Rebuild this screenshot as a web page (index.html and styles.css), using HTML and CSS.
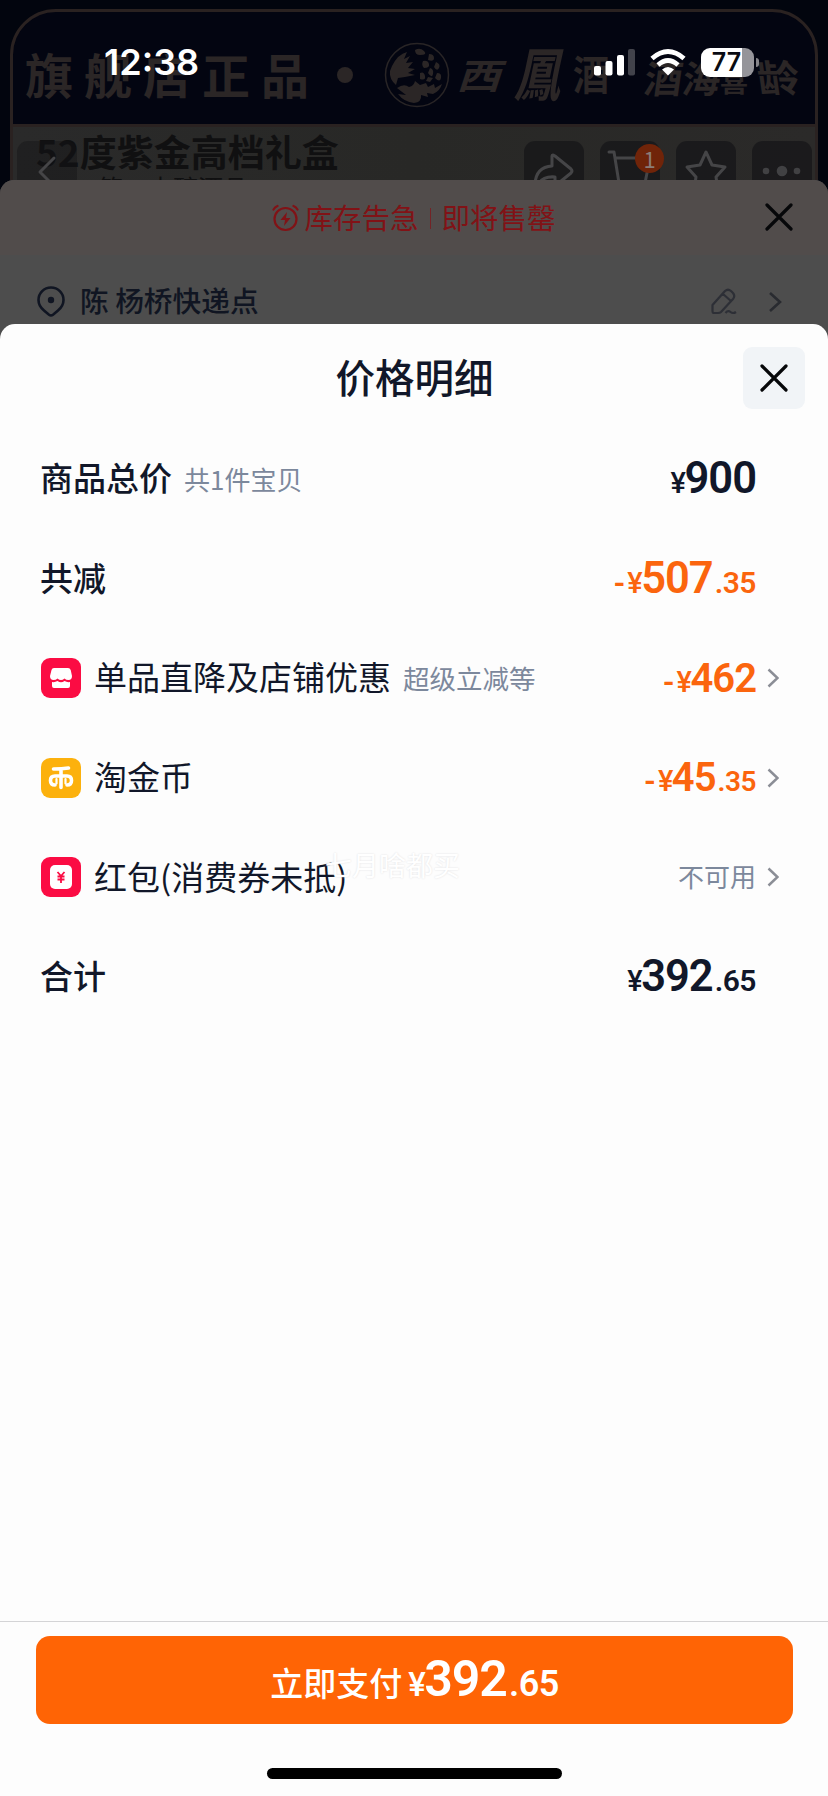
FILE: index.html
```
<!DOCTYPE html>
<html lang="zh-CN">
<head>
<meta charset="UTF-8">
<meta name="viewport" content="width=device-width, initial-scale=1.0">
<title>价格明细</title>
<link rel="stylesheet" href="styles.css">
</head>
<body>

<div class="screen">
    <!-- 商品头图 -->
    <div class="hero">
        <div class="banner">
            <div class="banner-top">
                <span class="flagship">旗舰店正品</span>
                <span class="dot"></span>
                <svg class="seal" width="66" height="66" viewBox="0 0 66 66">
                    <circle cx="33" cy="33" r="31.5" fill="none" stroke="#292526" stroke-width="1.5"/>
                    <path d="M8 24Q14 12 23 10L20 17L26 14L22 21L29 20L24 26L31 27L24 31L31 33L21 35L14 36L12 43Q5 37 6 29Z" fill="#2b2626"/>
                    <path d="M31 8Q36 5 40 9T36 13Q31 13 31 8ZM45 12Q50 12 50 16T44 18ZM39 19Q44 18 45 22T40 26Q37 23 39 19ZM52 20Q57 22 55 26T50 25ZM46 26Q50 27 49 32T44 31ZM53 31Q58 31 57 36T51 36ZM36 31Q40 29 41 34T36 37ZM44 35L49 36L46 40L42 39Z" fill="#2b2626"/>
                    <path d="M13 46Q20 41 25 45Q30 44 31 39L36 43L42 41L44 45L50 42L51 46L58 42Q56 49 49 52L43 51L44 55L37 53Q38 60 30 61Q20 60 14 52L22 53Z" fill="#2b2626"/>
                </svg>
                <span class="brush b1">西</span>
                <span class="brush b2">鳳</span>
                <span class="brush b3">酒</span>
                <span class="brush b4">酒海</span>
                <span class="brush b5">喜</span>
                <span class="brush b6">龄</span>
            </div>
            <div class="banner-body">
                <div class="product">52度紫金高档礼盒</div>
                <div class="product-sub">第一支醇酒品</div>
            </div>
        </div>
        <div class="nav">
            <span class="nav-btn back"><svg width="60" height="60" viewBox="0 0 60 60"><path d="M37 17L23 31L37 45"/></svg></span>
            <span class="nav-btn"><svg width="60" height="60" viewBox="0 0 60 60"><path d="M11 43Q12 26 28 25V15Q28 13 31 15L47 28Q49 30 47 32L31 45V36Q20 35 15 42"/></svg></span>
            <span class="nav-btn cart"><svg width="60" height="60" viewBox="0 0 60 60"><path d="M9 11h5l5 31h26l5-25H15"/></svg><b class="badge">1</b></span>
            <span class="nav-btn"><svg width="60" height="60" viewBox="0 0 60 60"><path d="M30 11L36 24L49 26L40 36L42 49L30 43L18 49L20 36L11 26L24 24Z"/></svg></span>
            <span class="nav-btn"><svg class="more" width="60" height="60" viewBox="0 0 60 60"><circle cx="14" cy="30" r="3.3"/><circle cx="30" cy="30" r="5.3"/><circle cx="45" cy="30" r="3.3"/></svg></span>
        </div>
    </div>

    <!-- 状态栏 -->
    <div class="status">
        <span class="time">12:38</span>
        <div class="status-icons">
            <svg width="41" height="27" viewBox="0 0 41 27">
                <rect x="0" y="17" width="7" height="9.5" rx="2" fill="#fff"/>
                <rect x="11.5" y="12" width="7" height="14.5" rx="2" fill="#fff"/>
                <rect x="23" y="6" width="7" height="20.5" rx="2" fill="#fff"/>
                <rect x="34" y="0" width="7" height="26.5" rx="2" fill="#42434b"/>
            </svg>
            <svg class="wifi" width="36" height="27" viewBox="0 0 36 27">
                <g fill="none" stroke="#fff" stroke-width="4.8">
                    <path d="M2 9.5Q18-4.5 34 9.5"/>
                    <path d="M8 16Q18 7 28 16"/>
                </g>
                <path d="M12 20.5Q18 15.5 24 20.5L18 26.5Z" fill="#fff"/>
            </svg>
            <span class="battery">77</span>
            <span class="battery-cap"></span>
        </div>
    </div>

    <!-- 下单弹层 -->
    <div class="order">
        <div class="stock">
            <svg class="alarm" width="27" height="28" viewBox="0 0 27 28">
                <g fill="none" stroke="#811216" stroke-width="2.2" stroke-linecap="round">
                    <circle cx="13.5" cy="15" r="11"/>
                    <path d="M1.5 5.5Q3 3 5.5 2M25.5 5.5Q24 3 21.5 2"/>
                </g>
                <path d="M15 8L8.5 16H13L12 22L18.5 14H14Z" fill="#811216"/>
            </svg>
            <span class="stock-text">库存告急</span>
            <i class="bar"></i>
            <span class="stock-text">即将售罄</span>
            <svg class="order-close" width="28" height="28" viewBox="0 0 28 28"><path d="M2 2L26 26M26 2L2 26"/></svg>
        </div>
        <div class="address">
            <svg width="28" height="31" viewBox="0 0 28 31">
                <path d="M14 1.5A12.5 12.5 0 0 0 1.5 14Q1.5 20 7 24.5L12 28.8Q14 30.2 16 28.8L21 24.5Q26.5 20 26.5 14A12.5 12.5 0 0 0 14 1.5Z" fill="none" stroke="#101522" stroke-width="2.6"/>
                <circle cx="14" cy="14" r="3.2" fill="#101522"/>
            </svg>
            <span class="address-name">陈 杨桥快递点</span>
            <svg class="edit" width="26" height="27" viewBox="0 0 26 27"><path d="M1.5 17L14 3Q17 .5 20 3L22 5Q24.5 8 22 11L10 24Q9 25 7 25H3Q1.5 25 1.5 23ZM12 6L20 13M14.5 25Q17 22 19.5 24T25 24"/></svg>
            <svg class="go" width="14" height="22" viewBox="0 0 14 22"><path d="M2 2L12 11L2 20"/></svg>
        </div>
    </div>

    <!-- 价格明细 -->
    <div class="sheet">
        <div class="sheet-head">
            <h1>价格明细</h1>
            <button class="close"><svg width="28" height="28" viewBox="0 0 28 28"><path d="M2 2L26 26M26 2L2 26"/></svg></button>
        </div>
        <div class="rows">
            <div class="row">
                <span class="name strong">商品总价</span><span class="note count">共1件宝贝</span>
                <span class="price"><small class="yen">¥</small>900</span>
            </div>
            <div class="row">
                <span class="name strong">共减</span>
                <span class="price off"><small class="minus">-</small><small class="yen">¥</small>507<small class="cents">.35</small></span>
            </div>
            <div class="row">
                <svg class="icon" width="40" height="40" viewBox="0 0 40 40">
                    <rect width="40" height="40" rx="9" fill="#fb0c43"/>
                    <path d="M13 10H27Q29 10 29.7 12L31 18Q31 22 27.5 22Q25 22 23.5 20.5Q20 23.5 16.5 20.5Q15 22 12.5 22Q9 22 9 18L10.5 12Q11 10 13 10Z" fill="#fff"/>
                    <path d="M11 24Q14 24.5 16.5 23Q20 25.5 23.5 23Q26 24.5 29 24V28Q29 30 27 30H13Q11 30 11 28Z" fill="#fff"/>
                </svg>
                <span class="name">单品直降及店铺优惠</span><span class="note">超级立减等</span>
                <span class="price off mid"><small class="minus">-</small><small class="yen">¥</small>462</span>
                <svg class="arrow" width="12" height="20" viewBox="0 0 12 20"><path d="M1.5 1.5L10.5 10L1.5 18.5"/></svg>
            </div>
            <div class="row">
                <svg class="icon" width="40" height="40" viewBox="0 0 40 40">
                    <rect width="40" height="40" rx="9" fill="#fcb10d"/>
                    <g fill="none" stroke="#fff" stroke-width="3.6" stroke-linecap="round">
                        <path d="M12.5 11Q21 11 27.5 10M20 11V29.500M14 27Q9.500 27 9.500 22.500T14 18H26Q30.500 18 30.500 22.500T26 27"/>
                        <path d="M15.5 21V25.5M24.5 21V25.5" stroke-width="2.200"/>
                    </g>
                </svg>
                <span class="name">淘金币</span>
                <span class="price off mid"><small class="minus">-</small><small class="yen">¥</small>45<small class="cents">.35</small></span>
                <svg class="arrow" width="12" height="20" viewBox="0 0 12 20"><path d="M1.5 1.5L10.5 10L1.5 18.5"/></svg>
            </div>
            <div class="row">
                <svg class="icon" width="40" height="40" viewBox="0 0 40 40">
                    <rect width="40" height="40" rx="9" fill="#fb0c43"/>
                    <rect x="9" y="8" width="22" height="24" rx="5" fill="#fff"/>
                    <path d="M16.5 15L20 19L23.5 15M16.5 19.5H23.5M16.5 22.5H23.5M20 19V26" fill="none" stroke="#fb0c43" stroke-width="1.8"/>
                </svg>
                <span class="name">红包(消费券未抵)</span>
                <span class="disabled">不可用</span>
                <svg class="arrow" width="12" height="20" viewBox="0 0 12 20"><path d="M1.5 1.5L10.5 10L1.5 18.5"/></svg>
                <span class="watermark">七月啥都买</span>
            </div>
            <div class="row">
                <span class="name strong">合计</span>
                <span class="price"><small class="yen">¥</small>392<small class="cents">.65</small></span>
            </div>
        </div>
        <div class="footer">
            <button class="pay"><span class="pay-text">立即支付</span><span class="price pay-price"><small class="yen">¥</small>392<small class="cents">.65</small></span></button>
            <div class="home"></div>
        </div>
    </div>
</div>

</body>
</html>
```
FILE: styles.css
```
body {
    margin: 0;
    font-family: "Noto Sans CJK SC", sans-serif;
    color: #111729;
}

.screen {
    position: relative;
    display: flex;
    flex-direction: column;
    width: 828px;
    height: 1796px;
    overflow: hidden;
    background: #02050e;
}

/* 头图 */
.hero {
    height: 180px;
    flex: none;
}

.banner {
    box-sizing: border-box;
    width: 808px;
    height: 180px;
    margin: 0 10px;
    padding-top: 9px;
}

.banner-top {
    box-sizing: border-box;
    position: relative;
    height: 118px;
    border: 3px solid #2a2221;
    border-radius: 46px 46px 0 0;
    background: #030511;
    color: #2b2626;
}

.flagship {
    position: absolute;
    left: 12px;
    top: 21px;
    font-size: 48px;
    line-height: 80px;
    font-weight: 700;
    letter-spacing: 11px;
    white-space: nowrap;
}

.dot {
    position: absolute;
    left: 324px;
    top: 55px;
    width: 16px;
    height: 16px;
    border-radius: 50%;
    background: #2b2626;
}

.seal {
    position: absolute;
    left: 371px;
    top: 30px;
}

.brush {
    position: absolute;
    line-height: 1;
    font-weight: 700;
    white-space: nowrap;
}

.b1 {
    left: 448px;
    top: 40px;
    font-size: 44px;
    transform: skewX(-18deg) scaleY(0.8);
}

.b2 {
    left: 506px;
    top: 36px;
    font-size: 46px;
    transform: skewX(-12deg) scaleY(1.25);
}

.b3 {
    left: 560px;
    top: 42px;
    font-size: 36px;
    transform: scaleY(1.15);
}

.b4 {
    left: 632px;
    top: 46px;
    font-size: 38px;
    transform: skewX(-8deg);
}

.b5 {
    left: 707px;
    top: 54px;
    font-size: 28px;
}

.b6 {
    left: 744px;
    top: 43px;
    font-size: 42px;
    transform: skewX(8deg) scaleY(0.9);
}

.banner-body {
    height: 53px;
    padding-left: 23px;
    border: solid #2a2221;
    border-width: 0 3px;
    background: linear-gradient(90deg, #2a2a2a, #282826 50%, #2b2a29);
    color: #101011;
    overflow: hidden;
}

.product {
    font-size: 37px;
    line-height: 48px;
    font-weight: 700;
}

.product-sub {
    padding-left: 62px;
    font-size: 25px;
    line-height: 25px;
}

.nav {
    position: absolute;
    left: 17px;
    right: 16px;
    top: 141px;
    display: flex;
    gap: 16px;
}

.nav-btn {
    position: relative;
    width: 60px;
    height: 60px;
    border-radius: 11px;
    background: rgba(21, 21, 23, 0.72);
}

.nav-btn.back {
    margin-right: auto;
    background: rgba(21, 21, 23, 0.45);
}

.nav-btn svg {
    display: block;
    fill: none;
    stroke: #454547;
    stroke-width: 3;
    stroke-linejoin: round;
    stroke-linecap: round;
}

.nav-btn .more {
    fill: #414143;
    stroke: none;
}

.badge {
    position: absolute;
    left: 35px;
    top: 3px;
    width: 29px;
    height: 29px;
    border-radius: 50%;
    background: #702409;
    color: #8b7c78;
    font-size: 22px;
    line-height: 29px;
    font-weight: 400;
    text-align: center;
}

/* 状态栏 */
.status {
    position: absolute;
    left: 0;
    top: 34px;
    display: flex;
    justify-content: space-between;
    align-items: center;
    box-sizing: border-box;
    width: 828px;
    height: 56px;
    padding: 0 69px 0 104px;
    color: #fff;
}

.time {
    font-family: Inter, sans-serif;
    font-size: 36px;
    font-weight: 600;
}

.status-icons {
    display: flex;
    align-items: center;
}

.wifi {
    margin: 0 15px;
}

.battery {
    box-sizing: border-box;
    width: 53px;
    height: 29px;
    padding-right: 2px;
    border-radius: 9px;
    background: linear-gradient(90deg, #fff 41px, #95959a 41px);
    color: #0a0b12;
    font-family: Inter, sans-serif;
    font-size: 25px;
    line-height: 29px;
    font-weight: 600;
    text-align: center;
}

.battery-cap {
    width: 3px;
    height: 9px;
    margin-left: 2px;
    border-radius: 0 4px 4px 0;
    background: #85858a;
}

/* 下单弹层 */
.order {
    position: relative;
    flex: none;
    height: 164px;
    margin-bottom: -20px;
    border-radius: 14px 14px 0 0;
    background: #4d4d4d;
}

.stock {
    position: relative;
    display: flex;
    align-items: center;
    justify-content: center;
    height: 75px;
    border-radius: 14px 14px 0 0;
    background: #514c4b;
    color: #811216;
    font-size: 28.5px;
}

.alarm {
    margin-right: 5px;
}

.stock-text {
    padding-bottom: 3px;
}

.bar {
    width: 1px;
    height: 21px;
    margin: 2px 11px 0;
    background: #742326;
}

.order-close {
    position: absolute;
    right: 35px;
    top: 23px;
}

.order-close path,
.close path {
    fill: none;
    stroke: #060709;
    stroke-width: 3.2;
    stroke-linecap: round;
}

.address {
    display: flex;
    align-items: center;
    height: 93px;
    padding: 0 46px 0 37px;
}

.address-name {
    margin-left: 15px;
    padding-bottom: 4px;
    color: #101522;
    font-size: 28.7px;
    font-weight: 500;
}

.edit {
    margin-left: auto;
    margin-right: 31px;
    fill: none;
    stroke: #2d2f36;
    stroke-width: 2.2;
    stroke-linejoin: round;
}

.go {
    fill: none;
    stroke: #292b30;
    stroke-width: 2.6;
}

/* 价格明细 */
.sheet {
    position: relative;
    display: flex;
    flex-direction: column;
    flex: 1;
    border-radius: 15px 15px 0 0;
    background: #fdfdfd;
}

.sheet-head {
    display: flex;
    align-items: center;
    justify-content: flex-end;
    height: 108px;
    padding-right: 23px;
}

.sheet-head h1 {
    flex: 1;
    margin: 0 0 0 86px;
    padding-bottom: 5px;
    font-size: 39.5px;
    font-weight: 500;
    text-align: center;
}

.close {
    width: 62px;
    height: 62px;
    padding: 0;
    border: none;
    border-radius: 9px;
    background: #f1f4f7;
}

.close svg {
    display: block;
    margin: auto;
}

.rows {
    flex: 1;
    margin-top: -3px;
}

.row {
    position: relative;
    display: flex;
    align-items: center;
    height: 99.6px;
    padding: 0 72px 0 40px;
}

.icon {
    margin: 0 13px 0 1px;
}

.name {
    padding-bottom: 3px;
    font-size: 33px;
}

.strong {
    font-weight: 500;
}

.note {
    margin-left: 12px;
    color: #7c889c;
    font-size: 26.5px;
}

.count {
    font-size: 26px;
}

.price {
    margin-left: auto;
    padding-top: 5px;
    font-family: Roboto, sans-serif;
    font-size: 43.5px;
    line-height: 50px;
    font-weight: 600;
    letter-spacing: -1px;
    white-space: nowrap;
}

.price small {
    font-size: 30px;
    font-weight: 500;
}

.price .yen {
    font-size: 29px;
    letter-spacing: -1.5px;
}

.price .minus {
    margin-right: 3px;
    font-weight: 700;
}

.price .cents {
    margin-left: 2px;
    font-weight: 600;
    letter-spacing: -0.5px;
}

.off {
    color: #fb650e;
}

.mid {
    font-size: 40px;
}

.mid .cents {
    font-size: 28px;
}

.arrow {
    position: absolute;
    right: 49px;
    fill: none;
    stroke: #8b8e96;
    stroke-width: 2.5;
}

.disabled {
    margin-left: auto;
    padding-bottom: 3px;
    color: #7c889c;
    font-size: 26px;
}

.watermark {
    position: absolute;
    left: 325px;
    top: 20px;
    color: #fff;
    font-size: 27px;
    line-height: 36px;
    text-shadow: 0 0 2px #dedee0;
}

/* 底部支付 */
.footer {
    box-sizing: border-box;
    height: 175px;
    padding: 14px 35px 0 36px;
    border-top: 1px solid #d4d4d6;
}

.pay {
    display: flex;
    align-items: center;
    justify-content: center;
    width: 100%;
    height: 88px;
    padding: 0;
    border: none;
    border-radius: 14px;
    background: #ff6405;
    color: #fff;
    font-family: inherit;
}

.pay-text {
    padding-top: 3px;
    font-size: 33px;
    font-weight: 500;
}

.pay-price {
    margin-left: 6px;
    padding-top: 4px;
    font-size: 50px;
}

.pay-price .cents {
    font-size: 36px;
}

.pay-price .yen {
    font-size: 33px;
}

.home {
    width: 295px;
    height: 11px;
    margin: 44px auto 0;
    border-radius: 6px;
    background: #000;
}
```
